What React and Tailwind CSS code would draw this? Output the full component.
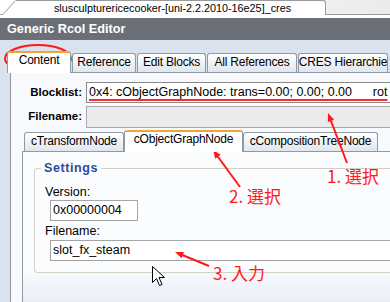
import React from 'react';

const Tab = ({ label, active, className = '' }) => (
  <div
    className={
      active
        ? `relative z-10 -mb-px h-[22px] bg-white border border-b-0 border-[#8f9aa5] border-t-2 border-t-[#eaa53b] rounded-t-[3px] flex justify-center shrink-0 ${className}`
        : `h-[19px] pt-[1px] bg-gradient-to-b from-white to-[#dfe6ee] border border-b-0 border-[#8f9aa5] rounded-t-[3px] flex justify-center shrink-0 ${className}`
    }
  >
    <span className="text-[12px] leading-[14px] tracking-[-0.2px] text-black whitespace-nowrap">{label}</span>
  </div>
);

const Arrow = ({ x1, y1, x2, y2 }) => {
  const a = Math.atan2(y2 - y1, x2 - x1);
  const l = 9;
  const w = 0.38;
  const p1 = [x2 - l * Math.cos(a - w), y2 - l * Math.sin(a - w)];
  const p2 = [x2 - l * Math.cos(a + w), y2 - l * Math.sin(a + w)];
  return (
    <g>
      <line x1={x1} y1={y1} x2={x2 - 4 * Math.cos(a)} y2={y2 - 4 * Math.sin(a)} stroke="#ff1a1a" strokeWidth="2" />
      <polygon points={`${x2},${y2} ${p1[0]},${p1[1]} ${p2[0]},${p2[1]}`} fill="#ff1a1a" />
    </g>
  );
};

const Note = ({ text, className }) => (
  <div
    className={`absolute text-[17px] leading-none text-[#ff1a1a] whitespace-nowrap ${className}`}
    style={{ fontFamily: '"Noto Sans CJK JP", sans-serif' }}
  >
    {text}
  </div>
);

export default function App() {
  return (
    <div
      className="relative w-[390px] h-[302px] overflow-hidden bg-[#d9e2ed] flex flex-col"
      style={{ fontFamily: '"Liberation Sans", Arial, sans-serif' }}
    >
      {/* document tab strip */}
      <div className="h-[15px] shrink-0 bg-gradient-to-r from-white via-[#f6f6f6] to-[#ebebeb] border-b border-[#9a9a9a] flex items-end pl-[2px]">
        <svg width="14" height="15" className="shrink-0 -mb-px" viewBox="0 0 14 15">
          <polygon points="0,15 13,0.5 14,0.5 14,15" fill="#fff" />
          <line x1="0.5" y1="15" x2="13.5" y2="0.5" stroke="#9a9a9a" strokeWidth="1" />
        </svg>
        <div className="w-[310px] h-[15px] -mb-px bg-white border-t border-r border-[#9a9a9a] rounded-tr-[3px] flex items-center justify-center pl-[4px]">
          <span className="text-[10.8px] leading-none text-black whitespace-nowrap">slusculpturericecooker-[uni-2.2.2010-16e25]_cres</span>
        </div>
      </div>
      <div className="h-[3px] shrink-0 bg-white" />

      {/* title bar */}
      <div className="h-[22px] shrink-0 bg-[#6b7078] flex items-center px-[7px]">
        <span className="text-white font-bold text-[12.7px] leading-none">Generic Rcol Editor</span>
      </div>

      {/* outer tabs */}
      <div className="flex-1 flex flex-col pt-[11px]">
        <div className="flex items-end pl-[7px] gap-[1px] h-[21px]">
          <Tab label="Content" active className="w-[64px]" />
          <Tab label="Reference" className="w-[64px]" />
          <Tab label="Edit Blocks" className="w-[69px]" />
          <Tab label="All References" className="w-[90px]" />
          <Tab label="CRES Hierarchie" className="w-[90px]" />
        </div>

        <div className="flex-1 ml-[10px] bg-[#f8f9fc] border-l border-t border-[#8f9aa5] flex flex-col pt-[9px]">
          <div className="grid grid-cols-[71px_1fr] gap-x-[4px] gap-y-[3px] items-center">
            <span className="text-right font-bold text-[11.5px] leading-none text-black">Blocklist:</span>
            <div className="h-[21px] bg-white border border-[#8a8a8a] border-r-0 flex items-center pl-[2px] overflow-hidden">
              <span className="text-[12.5px] leading-none text-black whitespace-nowrap underline decoration-[#ff2a2a] decoration-[1.5px] underline-offset-[3px]">
                0x4: cObjectGraphNode: trans=0.00; 0.00; 0.00&nbsp;&nbsp;&nbsp;&nbsp;&nbsp;&nbsp;rot
              </span>
            </div>
            <span className="text-right font-bold text-[11.5px] leading-none text-black">Filename:</span>
            <div className="h-[22px] bg-[#ebebeb] border border-[#aaaaaa] border-r-0" />
          </div>

          {/* inner tabs */}
          <div className="flex items-end pl-[13px] mt-[2px] h-[21px]">
            <Tab label="cTransformNode" className="w-[100px]" />
            <Tab label="cObjectGraphNode" active className="w-[119px]" />
            <Tab label="cCompositionTreeNode" className="w-[135px]" />
          </div>

          <div className="flex-1 ml-[11px] bg-[#fbfcfd] border-l border-t border-[#8f9aa5] flex flex-col pt-[16px] pl-[11px]">
            <div className="relative border border-r-0 border-[#d0d0c4] rounded-l-[4px] pl-[10px] pt-[15px] pb-[11px]">
              <span className="absolute -top-[9px] left-[6px] px-[3px] bg-[#fbfcfd] text-[#2a4d9b] font-bold text-[12.5px] leading-[16px] tracking-[0.6px]">
                Settings
              </span>
              <div className="text-[12.5px] text-black leading-[16px]">Version:</div>
              <div className="ml-[5px] w-[88px] h-[21px] bg-white border border-[#a5a5a5] flex items-center px-[2px]">
                <span className="text-[12.5px] leading-none text-black">0x00000004</span>
              </div>
              <div className="mt-[2px] text-[12.5px] text-black leading-[16px]">Filename:</div>
              <div className="mt-[1px] ml-[5px] h-[21px] bg-white border border-r-0 border-[#a5a5a5] flex items-center px-[2px]">
                <span className="text-[12.5px] leading-none text-black">slot_fx_steam</span>
              </div>
            </div>
            <div className="flex-1 -ml-[11px] bg-gradient-to-b from-[#f7f9fc] to-[#eaeff7]" />
          </div>
        </div>
      </div>

      {/* annotations */}
      <svg className="absolute inset-0 pointer-events-none" width="390" height="302">
        <ellipse cx="38" cy="58.5" rx="33" ry="13.5" fill="none" stroke="#ff1a1a" strokeWidth="2" />
        <Arrow x1={347} y1={163} x2={328} y2={113} />
        <Arrow x1={240} y1={187} x2={213} y2={150} />
        <Arrow x1={209} y1={266} x2={175} y2={252} />
        {/* cursor */}
        <path
          d="M152.5 266.5 L152.5 282.5 L156.5 278.5 L159.5 285.5 L162 284.5 L159 277.5 L164.5 277.5 Z"
          fill="#fff"
          stroke="#000"
          strokeWidth="1"
        />
      </svg>
      <Note text="1. 選択" className="left-[327px] top-[167px]" />
      <Note text="2. 選択" className="left-[229px] top-[187px]" />
      <Note text="3. 入力" className="left-[213px] top-[264px]" />
    </div>
  );
}
